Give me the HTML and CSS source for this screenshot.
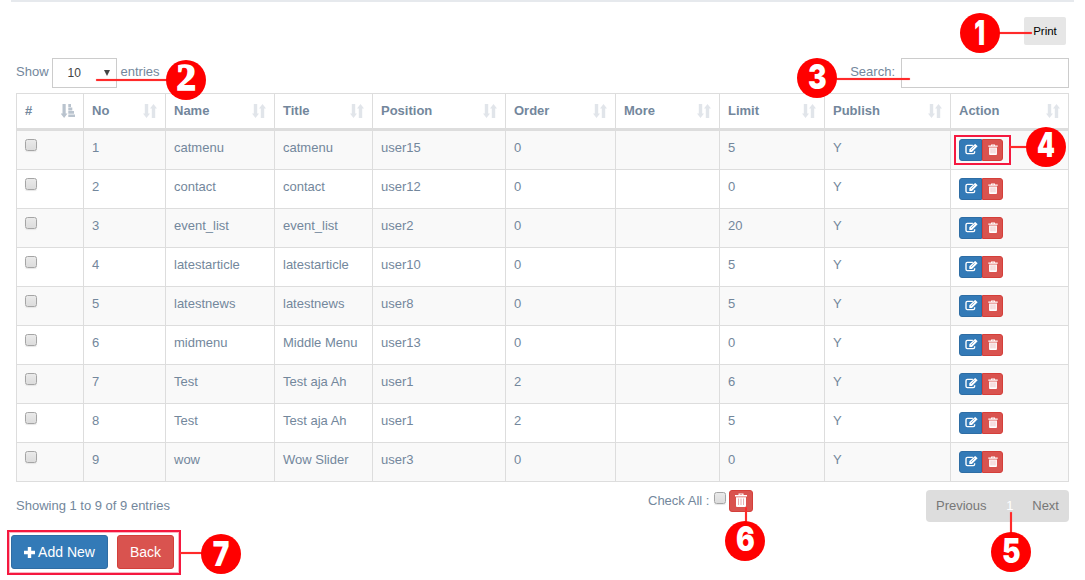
FILE: index.html
```
<!DOCTYPE html>
<html lang="en">
<head>
<meta charset="utf-8">
<title>Modules</title>
<link rel="stylesheet" href="styles.css">
</head>
<body>
<svg class="defs" width="0" height="0">
  <symbol id="sort" viewBox="0 0 14 14"><path d="M1.800 0h3.400v9.500h1.800L3.500 14 0 9.500h1.800zM8.800 14h3.400V4.500H14L10.500 0 7 4.500h1.800z"/></symbol>
  <symbol id="sorted" viewBox="0 0 14 14"><path d="M1.500 0h3.200v9.500h1.800L3.100 14-.3 9.500h1.800zM7.300 0h2.700v3H7.300zM7.300 3.600h4v2.800h-4zM7.300 7H13v2.800H7.300zM7.300 10.400H14V13H7.300z"/></symbol>
  <symbol id="edit" viewBox="0 0 14 12"><path d="M8.500 1.500H2.500Q1 1.500 1 3v6q0 1.500 1.500 1.500h6.400q1.500 0 1.500-1.500V7.800" fill="none" stroke="#fff" stroke-width="1.500"/><path d="M11-.1l2.700 2.600-6.200 6.100H4.600V5.700z" fill="#fff"/><path d="M6.500 6.500l4-4" stroke="#337ab7" stroke-width=".6"/></symbol>
  <symbol id="trash" viewBox="0 0 12 14"><path d="M3.500 2V.6h5V2H12v1.400H0V2zM4.700 2h2.600v-.4H4.700zM1 4.300h10V13q0 1-1 1H2q-1 0-1-1z" fill="#fff" fill-rule="evenodd"/><path d="M3.500 5.500v6.500M6 5.500v6.500M8.500 5.500v6.500" stroke="#e8b0b2" stroke-width="1"/></symbol>
</svg>
<main class="panel">
  <div class="toolbar"><button class="print">Print</button></div>
  <div class="filters">
    <div class="length">Show <span class="select"><span>10</span><svg width="6" height="6" viewBox="0 0 6 6"><path d="M0 0h6L3 6z"/></svg></span> entries</div>
    <label class="search">Search: <input type="text"></label>
  </div>
  <table class="grid">
    <colgroup><col class="c1"><col class="c2"><col class="c3"><col class="c4"><col class="c5"><col class="c6"><col class="c7"><col class="c8"><col class="c9"><col class="c10"></colgroup>
    <thead><tr>
      <th><div>#<svg class="active"><use href="#sorted"/></svg></div></th>
      <th><div>No<svg><use href="#sort"/></svg></div></th>
      <th><div>Name<svg><use href="#sort"/></svg></div></th>
      <th><div>Title<svg><use href="#sort"/></svg></div></th>
      <th><div>Position<svg><use href="#sort"/></svg></div></th>
      <th><div>Order<svg><use href="#sort"/></svg></div></th>
      <th><div>More<svg><use href="#sort"/></svg></div></th>
      <th><div>Limit<svg><use href="#sort"/></svg></div></th>
      <th><div>Publish<svg><use href="#sort"/></svg></div></th>
      <th><div>Action<svg><use href="#sort"/></svg></div></th>
    </tr></thead>
    <tbody>
      <tr><td><input type="checkbox"></td><td>1</td><td>catmenu</td><td>catmenu</td><td>user15</td><td>0</td><td></td><td>5</td><td>Y</td><td><div class="actions"><a class="edit"><svg><use href="#edit"/></svg></a><a class="del"><svg><use href="#trash"/></svg></a></div></td></tr>
      <tr><td><input type="checkbox"></td><td>2</td><td>contact</td><td>contact</td><td>user12</td><td>0</td><td></td><td>0</td><td>Y</td><td><div class="actions"><a class="edit"><svg><use href="#edit"/></svg></a><a class="del"><svg><use href="#trash"/></svg></a></div></td></tr>
      <tr><td><input type="checkbox"></td><td>3</td><td>event_list</td><td>event_list</td><td>user2</td><td>0</td><td></td><td>20</td><td>Y</td><td><div class="actions"><a class="edit"><svg><use href="#edit"/></svg></a><a class="del"><svg><use href="#trash"/></svg></a></div></td></tr>
      <tr><td><input type="checkbox"></td><td>4</td><td>latestarticle</td><td>latestarticle</td><td>user10</td><td>0</td><td></td><td>5</td><td>Y</td><td><div class="actions"><a class="edit"><svg><use href="#edit"/></svg></a><a class="del"><svg><use href="#trash"/></svg></a></div></td></tr>
      <tr><td><input type="checkbox"></td><td>5</td><td>latestnews</td><td>latestnews</td><td>user8</td><td>0</td><td></td><td>5</td><td>Y</td><td><div class="actions"><a class="edit"><svg><use href="#edit"/></svg></a><a class="del"><svg><use href="#trash"/></svg></a></div></td></tr>
      <tr><td><input type="checkbox"></td><td>6</td><td>midmenu</td><td>Middle Menu</td><td>user13</td><td>0</td><td></td><td>0</td><td>Y</td><td><div class="actions"><a class="edit"><svg><use href="#edit"/></svg></a><a class="del"><svg><use href="#trash"/></svg></a></div></td></tr>
      <tr><td><input type="checkbox"></td><td>7</td><td>Test</td><td>Test aja Ah</td><td>user1</td><td>2</td><td></td><td>6</td><td>Y</td><td><div class="actions"><a class="edit"><svg><use href="#edit"/></svg></a><a class="del"><svg><use href="#trash"/></svg></a></div></td></tr>
      <tr><td><input type="checkbox"></td><td>8</td><td>Test</td><td>Test aja Ah</td><td>user1</td><td>2</td><td></td><td>5</td><td>Y</td><td><div class="actions"><a class="edit"><svg><use href="#edit"/></svg></a><a class="del"><svg><use href="#trash"/></svg></a></div></td></tr>
      <tr><td><input type="checkbox"></td><td>9</td><td>wow</td><td>Wow Slider</td><td>user3</td><td>0</td><td></td><td>0</td><td>Y</td><td><div class="actions"><a class="edit"><svg><use href="#edit"/></svg></a><a class="del"><svg><use href="#trash"/></svg></a></div></td></tr>
    </tbody>
  </table>
  <div class="footer">
    <div class="info">Showing 1 to 9 of 9 entries</div>
    <div class="checkall"><span>Check All :</span><input type="checkbox"><a class="del"><svg><use href="#trash"/></svg></a></div>
    <div class="pages"><span>Previous</span><span class="current">1</span><span>Next</span></div>
  </div>
  <div class="buttons">
    <a class="btn add"><svg width="11" height="11" viewBox="0 0 11 11"><path d="M3.800 0h3.400v3.800H11v3.400H7.200V11H3.800V7.200H0V3.800h3.800z" fill="#fff"/></svg>Add New</a>
    <a class="btn back">Back</a>
  </div>
</main>
<div class="frame f4"></div>
<i class="line l1"></i><i class="line l2"></i><i class="line l3"></i><i class="line l4"></i><i class="line l5"></i><i class="line l6"></i><i class="line l7"></i>
<b class="badge b1"><span>1</span></b><b class="badge b2"><span>2</span></b><b class="badge b3"><span>3</span></b><b class="badge b4"><span>4</span></b><b class="badge b5"><span>5</span></b><b class="badge b6"><span>6</span></b><b class="badge b7"><span>7</span></b>
</body>
</html>
```
FILE: styles.css
```
* { box-sizing: border-box; }
body { margin: 0; width: 1085px; height: 580px; overflow: hidden; position: relative; background: #fff; color: #73879c; font: 13px/18px "Liberation Sans", Arial, sans-serif; }
.defs { position: absolute; }
.panel { margin: 0 11px; border-top: 2px solid #e6e9ed; }
.toolbar { display: flex; justify-content: flex-end; padding: 15px 8px 0 0; }
.print { width: 42px; height: 28px; padding: 0; border: 0; border-radius: 2px; background: #e6e6e6; color: #000; font: 11.5px "Liberation Sans", Arial, sans-serif; }
.filters { display: flex; justify-content: space-between; height: 30px; margin: 13px 5px 5px; }
.length, .search { display: flex; line-height: 27px; }
.select { display: flex; align-items: center; justify-content: space-between; width: 65px; height: 30px; margin: 0 4px 0 3px; padding: 0 6px 0 15px; border: 1px solid #ccc; color: #444; font-size: 12px; }
.select svg { fill: #444; }
.search input { width: 168px; height: 30px; margin: 0 0 0 6px; border: 1px solid #ccc; background: #fff; }

.grid { table-layout: fixed; width: 1053px; margin-left: 5px; border-collapse: separate; border-spacing: 0; border-right: 1px solid #ddd; }
.c1 { width: 67px; } .c2 { width: 82px; } .c3 { width: 109px; } .c4 { width: 98px; } .c5 { width: 133px; }
.c6 { width: 110px; } .c7 { width: 104px; } .c8 { width: 105px; } .c9 { width: 126px; } .c10 { width: 118px; }
th, td { padding: 8px 8px 0; border-left: 1px solid #ddd; vertical-align: top; text-align: left; }
th { height: 38px; border-top: 1px solid #ddd; border-bottom: 3px solid #ddd; }
th div { display: flex; justify-content: space-between; }
th svg { width: 14px; height: 14px; margin-top: 2px; fill: #e1e5ea; }
th svg.active { fill: #b9c3ce; }
td { height: 39px; border-bottom: 1px solid #ddd; }
tbody tr:nth-child(odd) { background: #f9f9f9; }
input[type=checkbox] { appearance: none; display: block; width: 12px; height: 12px; margin: 0; border: 1px solid #a5a5a5; border-radius: 2.5px; background: linear-gradient(#eaeaea, #dcdcdc); box-shadow: 0 1px 1px #e6e6e6; }
.actions { display: flex; }
.edit, .del { display: flex; align-items: center; justify-content: center; height: 22px; }
.edit { width: 23px; background: #337ab7; border: 1px solid #2e6da4; border-radius: 3px 0 0 3px; }
.edit svg { width: 13px; height: 11px; margin-left: 1px; margin-top: -2px; }
.del { width: 21px; background: #d9534f; border: 1px solid #d43f3a; border-radius: 0 3px 3px 0; }
.del svg { width: 10px; height: 11px; margin-top: -1px; }

.footer { display: grid; grid-template-columns: 632px 278px 143px; height: 40px; padding: 8px 0 0 5px; }
.info { line-height: 31px; }
.checkall { display: flex; line-height: 22px; }
.checkall span { width: 66px; }
.checkall input { margin: 2px 3px 0 0; }
.checkall .del { width: 24px; border-radius: 3px; }
.checkall .del svg { width: 12px; height: 14px; margin-top: -2px; }
.pages { display: flex; justify-content: space-between; height: 32px; padding: 0 10px; border-radius: 4px; background: #ddd; color: #777; line-height: 31px; }
.pages .current { color: #fff; margin-left: 10px; margin-right: 9px; }
.buttons { display: flex; gap: 9px; width: 174px; height: 45px; margin: 8px 0 0 -4px; padding: 3px 2px; border: 2px solid #f5183f; box-shadow: inset 0 0 0 1px #f9b5c2; }
.btn { display: flex; align-items: center; justify-content: center; height: 34px; border-radius: 3px; color: #fff; font-size: 14px; }
.add { width: 97px; gap: 3px; background: #337ab7; border: 1px solid #2e6da4; }
.back { width: 57px; background: #d9534f; border: 1px solid #d43f3a; }

/* Callouts over the page */
.frame, .line, .badge { position: absolute; }
.f4 { left: 954px; top: 135px; width: 57px; height: 30px; border: 2px solid #f5183f; }
.line { background: #ff2a2a; box-shadow: 0 0 1px #ff5050; border-radius: 1px; }
.l1 { left: 998px; top: 32px; width: 34px; height: 2px; }
.l2 { left: 96px; top: 79px; width: 72px; height: 2px; }
.l3 { left: 836px; top: 78px; width: 74px; height: 2px; }
.l4 { left: 1009px; top: 146px; width: 18px; height: 2px; }
.l5 { left: 1010px; top: 512px; width: 2px; height: 22px; }
.l6 { left: 745px; top: 507px; width: 2px; height: 16px; }
.l7 { left: 180px; top: 552px; width: 23px; height: 2px; }
.badge { display: flex; justify-content: center; width: 40px; height: 40px; border-radius: 50%; background: #f00; color: #fff; font: 900 34px/40px Inter, sans-serif; }
.badge span { transform: scaleX(.82); }
.b1 { left: 960px; top: 13px; }
.b1 span { transform: scaleX(.7); }
.b2 { left: 166px; top: 60px; font: bold 37px/35px "Liberation Serif", serif; -webkit-text-stroke: 1.5px #fff; }
.b2 span { transform: scaleX(1.05); }
.b3 { left: 797px; top: 58px; line-height: 37px; }
.b4 { left: 1026px; top: 127px; line-height: 35px; }
.b4 span { transform: scaleX(.75); }
.b5 { left: 991px; top: 532px; line-height: 38px; }
.b6 { left: 725px; top: 521px; line-height: 35px; }
.b7 { left: 201px; top: 534px; }
```
